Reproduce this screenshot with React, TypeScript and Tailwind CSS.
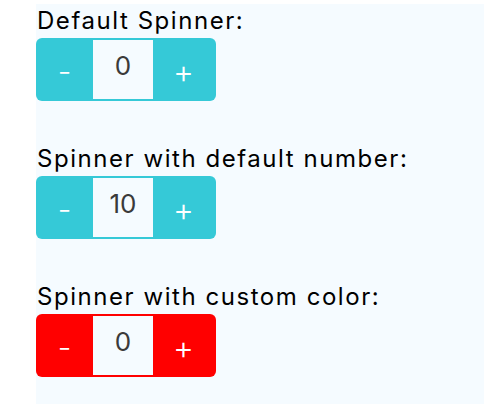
import React from "react";

function Spinner({ value, color }: { value: number; color: "teal" | "red" }) {
  const bg = color === "teal" ? "bg-[#35c9d7]" : "bg-[#ff0000]";
  return (
    <div className={`flex h-[63px] w-[180px] rounded-[6px] ${bg}`}>
      <div className="flex w-[57px] items-center justify-center pt-[2px] text-[30px] font-light leading-none text-white">
        -
      </div>
      <div className="my-[2px] flex w-[60px] items-center justify-center bg-[#f5fbff] pb-[7px] text-[26px] leading-none text-[#3a3a3a]">
        {value}
      </div>
      <div className="flex w-[63px] items-center justify-center pt-[4px] pr-[2px] text-[32px] font-light leading-none text-white">
        +
      </div>
    </div>
  );
}

export default function App() {
  const items: { label: string; value: number; color: "teal" | "red" }[] = [
    { label: "Default Spinner:", value: 0, color: "teal" },
    { label: "Spinner with default number:", value: 10, color: "teal" },
    { label: "Spinner with custom color:", value: 0, color: "red" },
  ];
  return (
    <div
      className="h-[404px] overflow-hidden bg-white pt-[4px] pl-[36px]"
      style={{ fontFamily: 'Inter, "Liberation Sans", Arial, sans-serif' }}
    >
      <div className="h-[400px] bg-[#f5fbff]">
        {items.map((it) => (
          <div key={it.label} className="mb-[41px]">
            <div className="h-[34px] pl-[1px] text-[24px] leading-[34px] tracking-[1.55px] text-black">
              {it.label}
            </div>
            <Spinner value={it.value} color={it.color} />
          </div>
        ))}
      </div>
    </div>
  );
}
